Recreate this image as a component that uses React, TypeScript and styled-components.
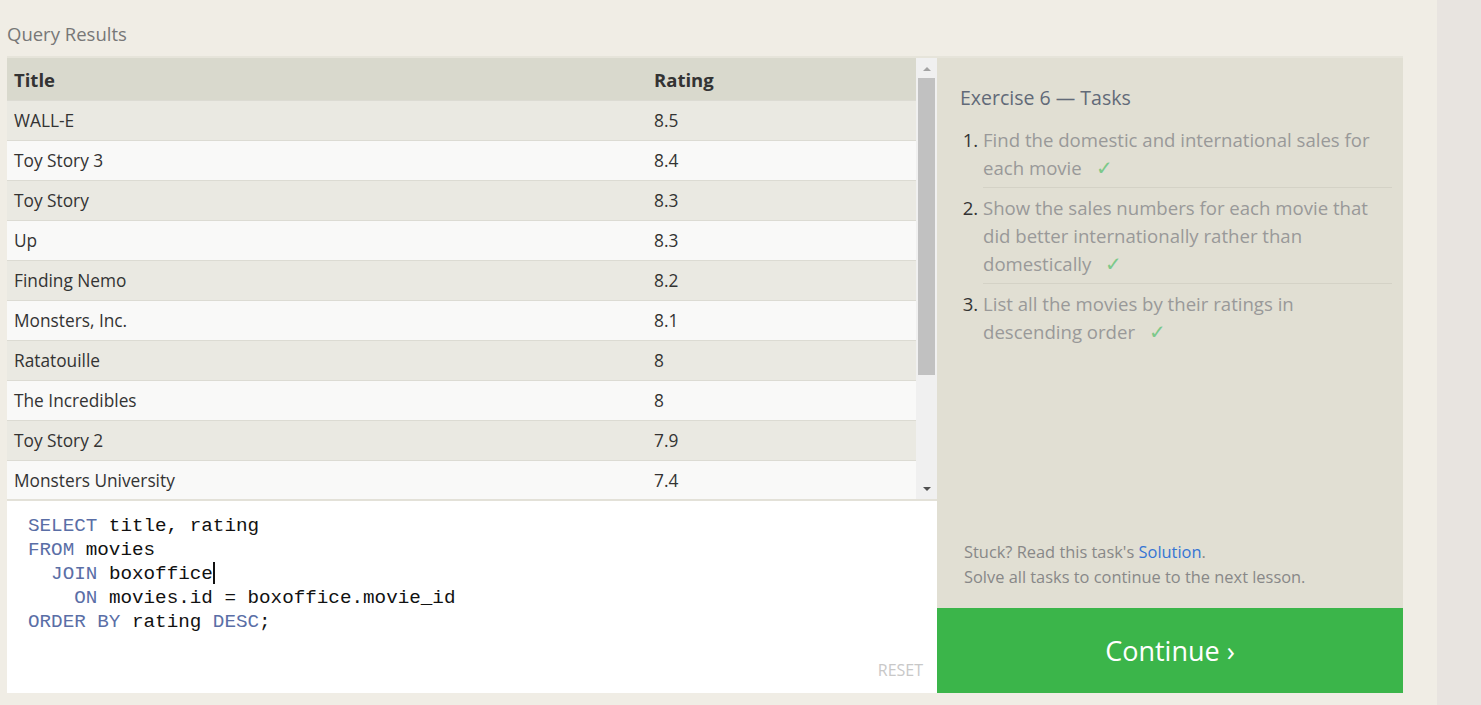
import React from "react"
import styled, { createGlobalStyle } from "styled-components"

const GlobalStyle = createGlobalStyle`
  html, body {
    margin: 0;
    padding: 0;
    background: #f0ede5;
    font-family: "Open Sans", "Noto Sans", sans-serif;
  }
`

const Page = styled.div`
  display: flex;
  height: 705px;
  overflow: hidden;
`

const Main = styled.main`
  width: 1437px;
  padding: 20px 34px 0 7px;
  box-sizing: border-box;
`

const SideStrip = styled.aside`
  flex: 1;
  background: #e8e4e0;
`

const SectionLabel = styled.div`
  font-size: 18.5px;
  color: #777;
  line-height: 28px;
  margin-bottom: 8px;
`

const Workspace = styled.div`
  display: grid;
  grid-template-columns: 930px 466px;
  border-top: 2px solid #e6e4da;
`

const LeftColumn = styled.div`
  display: flex;
  flex-direction: column;
`

const Results = styled.div`
  display: flex;
  height: 441px;
  border-bottom: 2px solid #e3e1d8;
`

const TableClip = styled.div`
  flex: 1;
  overflow: hidden;
`

const Table = styled.table`
  width: 100%;
  border-collapse: collapse;
  font-size: 17.3px;
  color: #333;
`

const HeadCell = styled.th`
  text-align: left;
  font-weight: 700;
  font-size: 18.5px;
  height: 42px;
  padding: 0 7px;
  background: #d9d9cd;
  color: #333;
`

const Row = styled.tr<{ alt: boolean }>`
  background: ${p => (p.alt ? "#f9f9f8" : "#eae9e2")};
  border-top: 1px solid #dcdbd3;
`

const Cell = styled.td<{ w?: number }>`
  height: 39px;
  padding: 0 7px;
  width: ${p => (p.w ? `${p.w}px` : "auto")};
`

const Scrollbar = styled.div`
  width: 21px;
  background: #f0f0f0;
  display: flex;
  flex-direction: column;
  align-items: center;
`

const Arrow = styled.div<{ down?: boolean }>`
  width: 0;
  height: 0;
  border-left: 4px solid transparent;
  border-right: 4px solid transparent;
  ${p =>
    p.down
      ? "border-top: 4px solid #505050; margin-top: auto; margin-bottom: 8px;"
      : "border-bottom: 4px solid #a3a3a3; margin-top: 9px;"}
`

const Thumb = styled.div`
  width: 17px;
  height: 297px;
  background: #c1c1c1;
  margin-top: 7px;
`

const Editor = styled.div`
  background: #fff;
  height: 192px;
  padding: 13px 21px 0;
  box-sizing: border-box;
  position: relative;
`

const Code = styled.pre`
  margin: 0;
  font-family: "Liberation Mono", "DejaVu Sans Mono", monospace;
  font-size: 19.25px;
  line-height: 24px;
  color: #111;
`

const Kw = styled.span`
  color: #5a6ea6;
`

const Caret = styled.span`
  display: inline-block;
  width: 2px;
  height: 22px;
  background: #111;
  vertical-align: -5px;
`

const Reset = styled.span`
  position: absolute;
  right: 14px;
  bottom: 12px;
  font-size: 16px;
  color: #c8c8c8;
`

const RightColumn = styled.div`
  display: flex;
  flex-direction: column;
  background: #e1dfd3;
`

const Tasks = styled.div`
  flex: 1;
  padding: 27px 11px 0 23px;
  display: flex;
  flex-direction: column;
`

const TasksTitle = styled.h2`
  margin: 0 0 15px;
  font-size: 19.5px;
  line-height: 26px;
  font-weight: 400;
  color: #626a78;
`

const TaskList = styled.ol`
  margin: 0;
  padding: 0 0 0 23px;
  font-size: 18.6px;
  line-height: 28px;
  color: #999;
`

const Task = styled.li`
  padding: 0 0 5px;
  & + & {
    border-top: 1px solid #d4d2c6;
    padding-top: 6px;
  }
  &::marker {
    color: #333;
  }
`

const Check = styled.span`
  color: #7cc98a;
  font-size: 20px;
  line-height: 1;
  margin-left: 14px;
`

const Hint = styled.div`
  margin-top: auto;
  padding: 0 0 19px 4px;
  font-size: 16.4px;
  line-height: 25px;
  color: #888;
`

const Link = styled.a`
  color: #3575d3;
  text-decoration: none;
`

const ContinueButton = styled.button`
  height: 85px;
  border: none;
  background: #3bb54a;
  color: #fff;
  font-family: "Open Sans", "Noto Sans", sans-serif;
  font-size: 27px;
  cursor: pointer;
`

const movies: [string, string][] = [
  ["WALL-E", "8.5"],
  ["Toy Story 3", "8.4"],
  ["Toy Story", "8.3"],
  ["Up", "8.3"],
  ["Finding Nemo", "8.2"],
  ["Monsters, Inc.", "8.1"],
  ["Ratatouille", "8"],
  ["The Incredibles", "8"],
  ["Toy Story 2", "7.9"],
  ["Monsters University", "7.4"],
  ["Cars", "7.2"],
]

const App = () => (
  <Page>
    <GlobalStyle />
    <Main>
      <SectionLabel>Query Results</SectionLabel>
      <Workspace>
        <LeftColumn>
          <Results>
            <TableClip>
              <Table>
                <thead>
                  <tr>
                    <HeadCell>Title</HeadCell>
                    <HeadCell>Rating</HeadCell>
                  </tr>
                </thead>
                <tbody>
                  {movies.map(([title, rating], i) => (
                    <Row key={title} alt={i % 2 === 1}>
                      <Cell w={626}>{title}</Cell>
                      <Cell>{rating}</Cell>
                    </Row>
                  ))}
                </tbody>
              </Table>
            </TableClip>
            <Scrollbar>
              <Arrow />
              <Thumb />
              <Arrow down />
            </Scrollbar>
          </Results>
          <Editor>
            <Code>
              <Kw>SELECT</Kw> title, rating{"\n"}
              <Kw>FROM</Kw> movies{"\n"}
              {"  "}<Kw>JOIN</Kw> boxoffice<Caret />{"\n"}
              {"    "}<Kw>ON</Kw> movies.id = boxoffice.movie_id{"\n"}
              <Kw>ORDER BY</Kw> rating <Kw>DESC</Kw>;
            </Code>
            <Reset>RESET</Reset>
          </Editor>
        </LeftColumn>
        <RightColumn>
          <Tasks>
            <TasksTitle>Exercise 6 — Tasks</TasksTitle>
            <TaskList>
              <Task>
                Find the domestic and international sales for each movie
                <Check>✓</Check>
              </Task>
              <Task>
                Show the sales numbers for each movie that did better internationally rather than
                domestically<Check>✓</Check>
              </Task>
              <Task>
                List all the movies by their ratings in descending order<Check>✓</Check>
              </Task>
            </TaskList>
            <Hint>
              Stuck? Read this task's <Link href="#">Solution</Link>.
              <br />
              Solve all tasks to continue to the next lesson.
            </Hint>
          </Tasks>
          <ContinueButton>Continue ›</ContinueButton>
        </RightColumn>
      </Workspace>
    </Main>
    <SideStrip />
  </Page>
)

export default App
